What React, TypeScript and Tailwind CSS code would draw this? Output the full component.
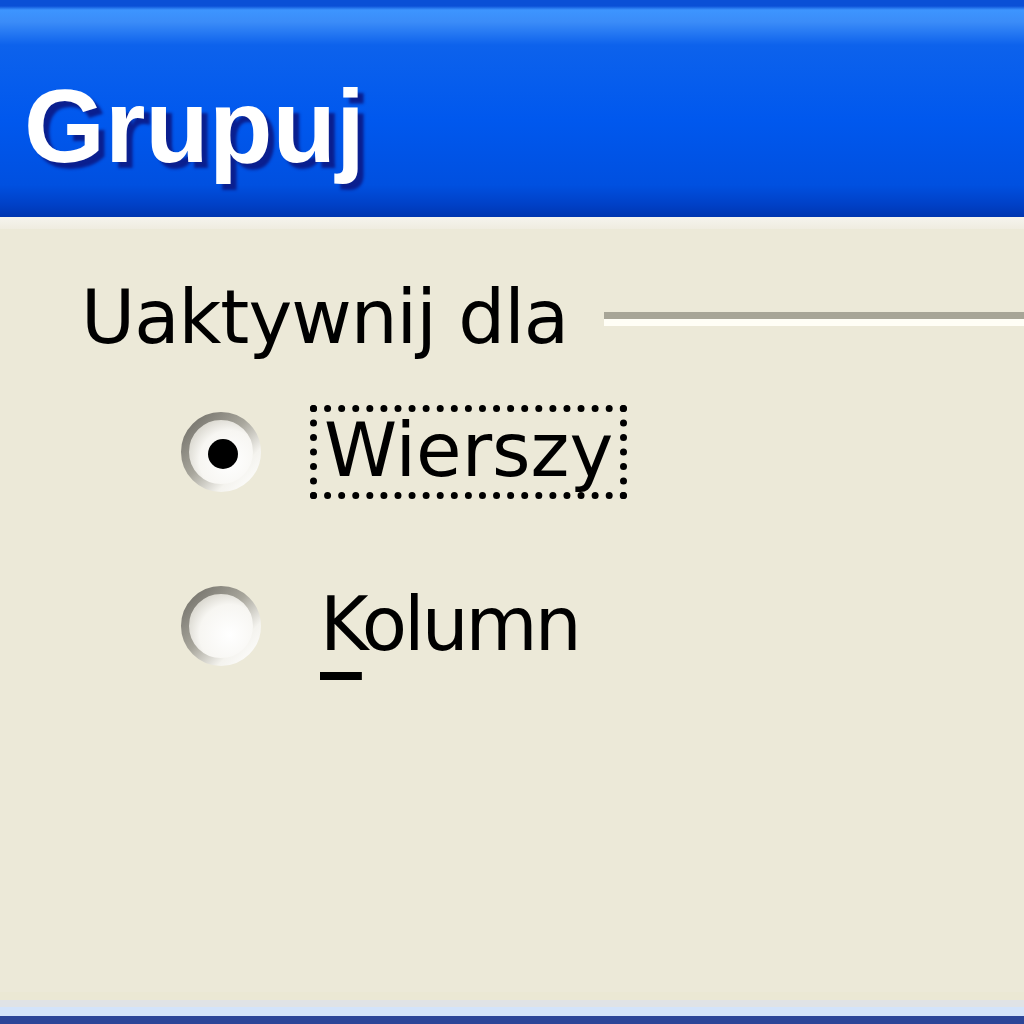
import { ReactNode } from "react";

function Radio({ checked = false }: { checked?: boolean }) {
  const ring = checked ? "ringOn" : "ringOff";
  const fill = checked ? "fillOn" : "fillOff";
  return (
    <svg width="86" height="86" viewBox="0 0 86 86" className="shrink-0">
      <defs>
        <linearGradient id={ring} x1="0" y1="0" x2="1" y2="1">
          <stop offset="0" stopColor="#6f6d66" />
          <stop offset="0.45" stopColor="#a8a69c" />
          <stop offset="0.75" stopColor="#f4f3ee" />
          <stop offset="1" stopColor="#ffffff" />
        </linearGradient>
        <radialGradient id={fill} cx="0.62" cy="0.62" r="0.6">
          <stop offset="0" stopColor="#ffffff" />
          <stop offset="0.7" stopColor="#f7f6f2" />
          <stop offset="1" stopColor="#dcdad2" />
        </radialGradient>
      </defs>
      <circle cx="43" cy="43" r="36" fill={`url(#${fill})`} stroke={`url(#${ring})`} strokeWidth="8" />
      {checked && <circle cx="45" cy="45" r="15" fill="#000000" />}
    </svg>
  );
}

function Option({ checked, focused, children }: { checked?: boolean; focused?: boolean; children: ReactNode }) {
  return (
    <div className="flex items-center">
      <Radio checked={checked} />
      <div
        className={`ml-[46px] px-[14px] pt-[2px] pb-[6px] leading-[86px] ${
          focused ? "outline-[7px] outline-dotted outline-black -outline-offset-[7px]" : ""
        }`}
      >
        {children}
      </div>
    </div>
  );
}

export default function App() {
  return (
    <div className="w-[1024px] h-[1024px] flex flex-col overflow-hidden bg-[#ece9d8] font-['DejaVu_Sans',sans-serif]">
      {/* Title bar */}
      <div className="h-[217px] flex items-center pl-[24px] pt-[34px] bg-[linear-gradient(180deg,#0a4fd6_0px,#0a4fd6_6px,#3d95ff_10px,#3b8cf8_22px,#0d62ec_45px,#0058ee_120px,#0050e0_185px,#0040c6_205px,#0036b0_217px)]">
        <span className="text-white font-bold text-[104px] leading-none font-['Liberation_Sans',sans-serif] [text-shadow:6px_6px_3px_#0a1f8f]">
          Grupuj
        </span>
      </div>
      <div className="h-[12px] bg-[linear-gradient(180deg,#f6f4ee,#efece0)]" />

      {/* Body */}
      <div className="flex-1 flex flex-col text-black text-[74px]">
        <div className="flex items-center pl-[81px] mt-[40px]">
          <span className="leading-[96px] tracking-[-1px]">Uaktywnij dla</span>
          <div className="flex-1 ml-[36px] mt-[4px] flex flex-col">
            <div className="h-[7px] bg-[#a7a597]" />
            <div className="h-[7px] bg-[#fffef6]" />
          </div>
        </div>

        <div className="flex flex-col gap-[80px] pl-[178px] mt-[40px]">
          <Option checked focused>
            Wierszy
          </Option>
          <Option>
            <span className="tracking-[-3px] -ml-[4px]">
              <span className="underline decoration-[8px] underline-offset-[22px]">K</span>olumn
            </span>
          </Option>
        </div>
      </div>

      {/* Lower frame edge */}
      <div className="h-[8px] bg-[#ebe8d4]" />
      <div className="h-[7px] bg-[#e0e3e6]" />
      <div className="h-[9px] bg-[#d4e4fa]" />
      <div className="h-[8px] bg-[#2b4598]" />
    </div>
  );
}
